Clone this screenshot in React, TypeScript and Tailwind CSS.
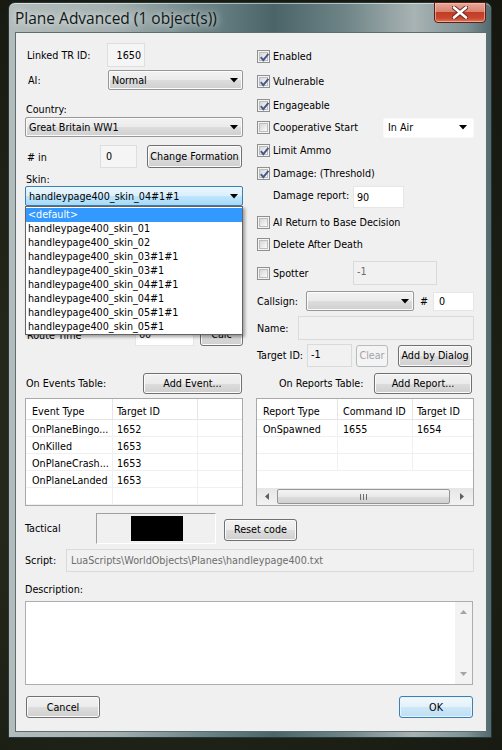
import React from "react";

type Kids = { children?: React.ReactNode; className?: string };

function Btn({ children, className = "", disabled, focused }: Kids & { disabled?: boolean; focused?: boolean }) {
  const skin = disabled
    ? "border-[#b7bcbf] bg-[#f4f4f4] text-[#a3a3a3]"
    : focused
    ? "border-[#3c7fb1] bg-[linear-gradient(#f1f8fd_0%,#e3f1fb_50%,#cfe7f7_51%,#bddff5_100%)] shadow-[inset_0_0_0_1px_#e6f4fd] text-black"
    : "border-[#707070] bg-[linear-gradient(#f2f2f2_0%,#ebebeb_50%,#dddddd_51%,#cfcfcf_100%)] shadow-[inset_0_0_0_1px_#fbfbfb] text-black";
  return (
    <div className={`flex shrink-0 items-center justify-center rounded-[3px] border ${skin} ${className}`}>{children}</div>
  );
}

function Arrow() {
  return (
    <svg width="8" height="5" viewBox="0 0 8 5" className="shrink-0">
      <path d="M0 0 H8 L4 4.5 Z" fill="#000" />
    </svg>
  );
}

function Combo({ text, className = "", variant = "button" }: { text: string; className?: string; variant?: "button" | "focus" | "flat" }) {
  const skin =
    variant === "focus"
      ? "border-[#3c7fb1] bg-[linear-gradient(#eaf6fd_0%,#d9f0fc_50%,#bee6fd_51%,#a7d9f5_100%)]"
      : variant === "flat"
      ? "border-[#fafafa] bg-white"
      : "border-[#979797] bg-[linear-gradient(#f2f2f2_0%,#ebebeb_50%,#dddddd_51%,#cfcfcf_100%)] shadow-[inset_0_0_0_1px_#fbfbfb]";
  return (
    <div className={`flex shrink-0 items-center justify-between rounded-[2px] border pl-[3px] pr-[4px] ${skin} ${className}`}>
      <span className="whitespace-nowrap">{text}</span>
      <Arrow />
    </div>
  );
}

function Check({ checked }: { checked?: boolean }) {
  return (
    <div className="h-[13px] w-[13px] shrink-0 border border-[#8e8f8f] bg-[#f4f4f4] p-px">
      <div className="relative h-full w-full border border-[#bdbdbd] bg-[linear-gradient(135deg,#d6d6d6,#fbfbfb)]">
        {checked && (
          <svg className="absolute -left-[1px] -top-[1px]" width="11" height="11" viewBox="0 0 11 11">
            <path d="M1.8 5.2 L4.3 8.2 L9.4 1.8" fill="none" stroke="#46578c" strokeWidth="1.9" />
          </svg>
        )}
      </div>
    </div>
  );
}

function CheckRow({ label, checked, className = "", children }: { label: string; checked?: boolean; className?: string; children?: React.ReactNode }) {
  return (
    <div className={`flex items-center pl-px ${className}`}>
      <Check checked={checked} />
      <span className="ml-[3px] whitespace-nowrap">{label}</span>
      {children}
    </div>
  );
}

function Edit({ text = "", className = "", kind = "white", top }: { text?: string; className?: string; kind?: "white" | "ro" | "disabled"; top?: boolean }) {
  const skin =
    kind === "white"
      ? "border-[#e6e6e6] bg-white text-black"
      : kind === "ro"
      ? "border-[#dedede] bg-[#f5f5f5] text-black"
      : "border-[#dadada] bg-[#f1f1f1] text-[#6d6d6d]";
  return (
    <div className={`flex shrink-0 border px-[3px] ${top ? "items-start pt-[3px]" : "items-center"} ${skin} ${className}`}>
      <span className="whitespace-nowrap">{text}</span>
    </div>
  );
}

function HTri({ dir }: { dir: "l" | "r" }) {
  return (
    <svg width="4" height="7" viewBox="0 0 4 7">
      <path d={dir === "l" ? "M4 0 V7 L0 3.5 Z" : "M0 0 V7 L4 3.5 Z"} fill="#5f5f5f" />
    </svg>
  );
}

function VTri({ dir }: { dir: "u" | "d" }) {
  return (
    <svg width="7" height="4" viewBox="0 0 7 4">
      <path d={dir === "u" ? "M0 4 H7 L3.5 0 Z" : "M0 0 H7 L3.5 4 Z"} fill="#a4a4a4" />
    </svg>
  );
}

const events = [
  ["OnPlaneBingo...", "1652"],
  ["OnKilled", "1653"],
  ["OnPlaneCrash...", "1653"],
  ["OnPlaneLanded", "1653"],
  ["", ""],
];

const skins = [
  "<default>",
  "handleypage400_skin_01",
  "handleypage400_skin_02",
  "handleypage400_skin_03#1#1",
  "handleypage400_skin_03#1",
  "handleypage400_skin_04#1#1",
  "handleypage400_skin_04#1",
  "handleypage400_skin_05#1#1",
  "handleypage400_skin_05#1",
];

export default function App() {
  return (
    <div className="relative h-[750px] w-[502px] overflow-hidden bg-[radial-gradient(circle_at_30%_60%,#2b2f1e_0%,#1c1f14_60%,#15170f_100%)] pl-[8px] pt-[2px] text-[10.7px] leading-[13px] text-black [font-family:'DejaVu_Sans_Condensed','DejaVu_Sans',sans-serif]">
      {/* window */}
      <div className="flex h-[736px] w-[484px] flex-col rounded-t-[7px] border border-[#25363a] bg-[linear-gradient(90deg,#b3bcbb_0%,#a3afaf_22%,#6d8588_40%,#4a6468_55%,#6f8588_70%,#a8b3b3_84%,#7d9194_95%,#52696d_100%)] shadow-[inset_0_1px_0_rgba(255,255,255,0.5)]">
        {/* title bar */}
        <div className="flex h-[29px] shrink-0 items-start justify-between pl-[6px] pr-[5px]">
          <div className="self-center whitespace-nowrap text-[15.5px] leading-[18px] text-[#101818] [font-family:'Open_Sans','Noto_Sans',sans-serif] [text-shadow:0_0_6px_rgba(255,255,255,0.8),0_0_12px_rgba(255,255,255,0.5)]">
            Plane Advanced (1 object(s))
          </div>
          <div className="-mt-px flex h-[21px] w-[52px] items-center justify-center rounded-b-[4px] border border-[#5b1f16] bg-[linear-gradient(#e9a897_0%,#d88472_45%,#c23c25_50%,#c9472f_80%,#e27a5a_100%)] shadow-[inset_0_0_0_1px_rgba(255,200,190,0.6)]">
            <svg width="16" height="13" viewBox="0 0 16 13">
              <path d="M2 1.5 L14 11.5 M14 1.5 L2 11.5" stroke="#6b2a20" strokeWidth="4.5" strokeLinecap="round" />
              <path d="M2 1.5 L14 11.5 M14 1.5 L2 11.5" stroke="#ffffff" strokeWidth="2.6" strokeLinecap="round" />
            </svg>
          </div>
        </div>

        {/* client */}
        <div className="ml-[6px] flex h-[700px] w-[472px] shrink-0 flex-col border border-[#5d6e71] bg-[#f0f0f0] pl-[9px] pt-[10px]">
          {/* top section */}
          <div className="flex gap-[13px]">
            {/* left column */}
            <div className="relative flex w-[218px] flex-col">
              <div className="flex h-[24px] items-center">
                <span className="w-[82px] pl-[2px]">Linked TR ID:</span>
                <Edit text="1650" kind="ro" className="h-[24px] w-[38px] justify-end" />
              </div>
              <div className="mt-[3px] flex h-[20px] items-center">
                <span className="w-[83px] pl-[3px]">AI:</span>
                <Combo text="Normal" className="h-[20px] w-[135px]" />
              </div>
              <div className="mt-[13px] flex h-[13px] items-center pl-px">Country:</div>
              <Combo text="Great Britain WW1" className="mt-px h-[20px] w-[218px]" />
              <div className="mt-[7px] flex h-[24px] items-center">
                <span className="mt-[3px] w-[75px] pl-[2px]">#&nbsp;in</span>
                <Edit text="0" kind="ro" className="mt-[1px] h-[23px] w-[37px] px-[5px]" />
                <Btn className="ml-[10px] h-[23px] w-[95px]">Change Formation</Btn>
              </div>
              <div className="mt-[5px] flex h-[13px] items-center pl-px">Skin:</div>
              <Combo text="handleypage400_skin_04#1#1" variant="focus" className="h-[20px] w-[218px]" />
              <div className="mt-[117px] flex h-[23px] items-center">
                <span className="w-[110px] pl-[2px] pt-[2px]">Route Time</span>
                <Edit text="60" kind="white" className="h-[23px] w-[59px]" />
                <Btn className="ml-[6px] h-[23px] w-[43px]">Calc</Btn>
              </div>

              {/* open dropdown list */}
              <div className="absolute left-0 top-[163px] z-10 flex w-[218px] flex-col border border-[#646464] bg-white py-px shadow-[2px_2px_3px_rgba(0,0,0,0.35)]">
                {skins.map((s, i) => (
                  <div
                    key={s}
                    className={`flex h-[13.9px] items-center whitespace-nowrap pl-[2px] ${i === 0 ? "bg-[#3399ff] text-white" : "text-black"}`}
                  >
                    {s}
                  </div>
                ))}
              </div>
            </div>

            {/* right column */}
            <div className="flex w-[218px] flex-col">
              <CheckRow label="Enabled" checked className="h-[26px]" />
              <CheckRow label="Vulnerable" checked className="h-[25px]" />
              <CheckRow label="Engageable" checked className="h-[23px]" />
              <div className="flex h-[21px] items-center">
                <div className="flex w-[127px] items-center pl-px">
                  <Check />
                  <span className="ml-[3px] whitespace-nowrap">Cooperative Start</span>
                </div>
                <Combo text="In Air" variant="flat" className="h-[20px] w-[91px] pl-[4px] pr-[6px]" />
              </div>
              <CheckRow label="Limit Ammo" checked className="h-[24px]" />
              <CheckRow label="Damage: (Threshold)" checked className="h-[22px]" />
              <div className="flex h-[24px] items-end">
                <span className="mb-[6px] w-[97px] pl-[17px]">Damage report:</span>
                <Edit text="90" kind="white" className="h-[22px] w-[51px]" />
              </div>
              <CheckRow label="AI Return to Base Decision" className="h-[28px]" />
              <CheckRow label="Delete After Death" className="h-[17px]" />
              <div className="mt-[8px] flex h-[24px] items-center">
                <div className="flex w-[97px] items-center pl-px">
                  <Check />
                  <span className="ml-[3px]">Spotter</span>
                </div>
                <Edit text="-1" kind="disabled" top className="h-[24px] w-[84px]" />
              </div>
              <div className="mt-[6px] flex h-[20px] items-center">
                <span className="w-[50px] pl-px">Callsign:</span>
                <Combo text="" className="h-[20px] w-[108px]" />
                <span className="w-[19px] pl-[6px]">#</span>
                <Edit text="0" kind="white" className="h-[19px] w-[41px] px-[5px]" />
              </div>
              <div className="mt-[5px] flex h-[24px] items-center">
                <span className="w-[42px] pl-px">Name:</span>
                <Edit kind="disabled" className="h-[24px] w-[176px]" />
              </div>
              <div className="mt-[4px] flex h-[23px] items-center">
                <span className="w-[51px] pl-px">Target ID:</span>
                <Edit text="-1" kind="disabled" top className="h-[23px] w-[45px] px-[2px] pt-[2px] text-black" />
                <Btn disabled className="ml-[4px] h-[22px] w-[32px]">Clear</Btn>
                <Btn className="ml-[10px] h-[22px] w-[74px]">Add by Dialog</Btn>
              </div>
            </div>
          </div>

          {/* events / reports */}
          <div className="mt-[6px] flex gap-[13px]">
            <div className="flex w-[218px] flex-col">
              <div className="flex h-[21px] items-center">
                <span className="flex-1 pl-px">On Events Table:</span>
                <Btn className="mr-px h-[21px] w-[99px]">Add Event...</Btn>
              </div>
              <div className="mt-[4px] flex h-[108px] flex-col border border-[#a9a9a9] bg-white">
                <div className="flex h-[21px] shrink-0 border-b border-[#e5e5e5]">
                  <div className="flex w-[87px] items-center border-r border-[#e5e5e5] pl-[6px] pt-[4px]">Event Type</div>
                  <div className="flex w-[85px] items-center border-r border-[#e5e5e5] pl-[4px] pt-[4px]">Target ID</div>
                  <div className="flex-1" />
                </div>
                {events.map((r, i) => (
                  <div key={i} className="flex h-[17px] shrink-0 border-b border-[#f0f0f0]">
                    <div className="flex w-[87px] items-center border-r border-[#f0f0f0] pl-[6px] pt-[2px] whitespace-nowrap">{r[0]}</div>
                    <div className="flex w-[85px] items-center border-r border-[#f0f0f0] pl-[4px] pt-[2px]">{r[1]}</div>
                    <div className="flex-1" />
                  </div>
                ))}
              </div>
            </div>

            <div className="flex w-[218px] flex-col">
              <div className="flex h-[21px] items-center">
                <span className="flex-1 pl-[23px]">On Reports Table:</span>
                <Btn className="mr-[2px] h-[21px] w-[98px]">Add Report...</Btn>
              </div>
              <div className="mt-[4px] flex h-[108px] flex-col overflow-hidden border border-[#a9a9a9] bg-white">
                <div className="flex h-[21px] shrink-0 border-b border-[#e5e5e5]">
                  <div className="flex w-[81px] items-center border-r border-[#e5e5e5] pl-[6px] pt-[4px]">Report Type</div>
                  <div className="flex w-[75px] items-center border-r border-[#e5e5e5] pl-[5px] pt-[4px]">Command ID</div>
                  <div className="flex flex-1 items-center whitespace-nowrap pl-[4px] pt-[4px]">Target ID</div>
                </div>
                {[["OnSpawned", "1655", "1654"], ["", "", ""], ["", "", ""]].map((r, i) => (
                  <div key={i} className="flex h-[17px] shrink-0 border-b border-[#f0f0f0]">
                    <div className="flex w-[81px] items-center border-r border-[#f0f0f0] pl-[6px] pt-[2px]">{r[0]}</div>
                    <div className="flex w-[75px] items-center border-r border-[#f0f0f0] pl-[5px] pt-[2px]">{r[1]}</div>
                    <div className="flex flex-1 items-center pl-[4px] pt-[2px]">{r[2]}</div>
                  </div>
                ))}
                <div className="flex-1" />
                {/* horizontal scrollbar */}
                <div className="flex h-[17px] shrink-0 items-center bg-[linear-gradient(#e6e6e6,#f3f3f3)]">
                  <div className="flex w-[19px] items-center justify-center">
                    <HTri dir="l" />
                  </div>
                  <div className="ml-px flex h-[15px] w-[173px] items-center justify-center gap-[2px] rounded-[2px] border border-[#959595] bg-[linear-gradient(#f4f4f4_0%,#e9e9e9_50%,#dcdcdc_51%,#d2d2d2_100%)]">
                    <div className="h-[6px] w-px bg-[#6f6f6f]" />
                    <div className="h-[6px] w-px bg-[#6f6f6f]" />
                    <div className="h-[6px] w-px bg-[#6f6f6f]" />
                  </div>
                  <div className="flex flex-1 items-center justify-center">
                    <HTri dir="r" />
                  </div>
                </div>
              </div>
            </div>
          </div>

          {/* tactical */}
          <div className="mt-[7px] flex h-[31px] items-center">
            <span className="w-[71px]">Tactical</span>
            <div className="flex h-[31px] w-[120px] items-start border-l border-t border-b border-r border-l-[#a0a0a0] border-t-[#a0a0a0] border-r-white border-b-white pl-[34px] pt-[2px]">
              <div className="h-[25px] w-[52px] bg-black" />
            </div>
            <Btn className="ml-[8px] mt-[2px] h-[22px] w-[73px]">Reset code</Btn>
          </div>

          {/* script */}
          <div className="mt-[5px] flex h-[23px] items-center">
            <span className="w-[41px]">Script:</span>
            <Edit text="LuaScripts\WorldObjects\Planes\handleypage400.txt" kind="disabled" className="h-[23px] w-[408px] pl-[4px] text-[#1a1a1a]" />
          </div>

          {/* description */}
          <div className="mt-[10px] flex h-[14px] items-center">Description:</div>
          <div className="mt-[5px] flex h-[84px] w-[448px] border border-[#abadb3] bg-white">
            <div className="flex-1" />
            <div className="flex w-[17px] flex-col items-center justify-between bg-[#f3f3f3] py-[8px]">
              <VTri dir="u" />
              <VTri dir="d" />
            </div>
          </div>

          {/* buttons */}
          <div className="mt-[11px] flex h-[22px] w-[448px] items-center justify-between">
            <Btn className="ml-px h-[22px] w-[74px]">Cancel</Btn>
            <Btn focused className="h-[22px] w-[74px]">OK</Btn>
          </div>
        </div>
      </div>
    </div>
  );
}
